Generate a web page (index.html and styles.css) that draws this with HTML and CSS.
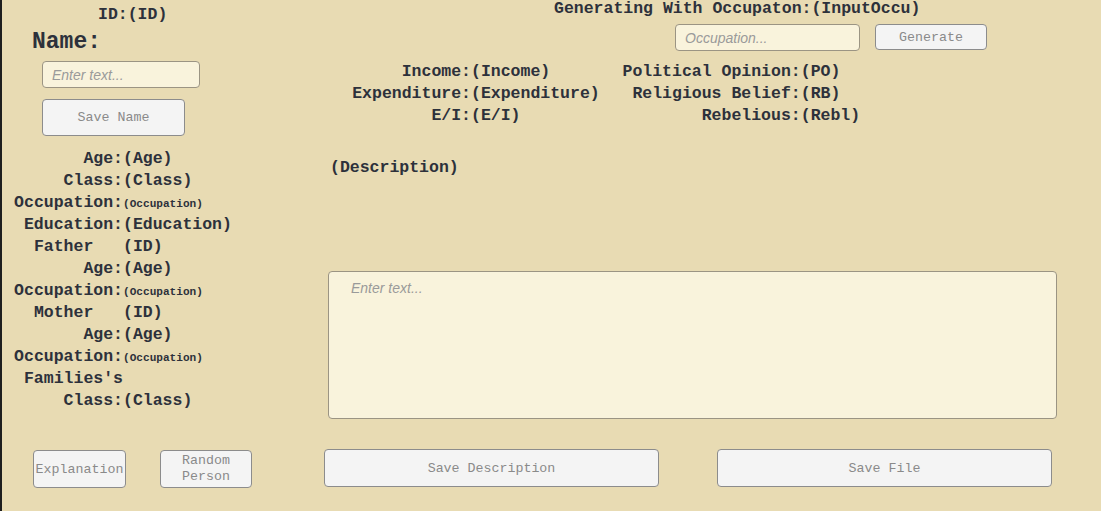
FILE: index.html
```html
<!DOCTYPE html>
<html lang="en">
  <head>
    <meta charset="UTF-8" />
    <meta name="viewport" content="width=device-width, initial-scale=1.0" />
    <title>Person Generator</title>
    <link rel="stylesheet" href="styles.css">
  </head>
  <body>
    <div class="page">
      <div class="side">
        <div class="id-line">ID:(ID)</div>
        <div class="name-title">Name:</div>
        <input type="text" class="field name-field" placeholder="Enter text..." />
        <button type="button" class="btn save-name">Save Name</button>

        <div class="info">
          <span class="lbl">Age:</span><span>(Age)</span>
          <span class="lbl">Class:</span><span>(Class)</span>
          <span class="lbl">Occupation:</span><span class="small">(Occupation)</span>
          <span class="lbl">Education:</span><span>(Education)</span>
          <span class="lbl">Father   </span><span>(ID)</span>
          <span class="lbl">Age:</span><span>(Age)</span>
          <span class="lbl">Occupation:</span><span class="small">(Occupation)</span>
          <span class="lbl">Mother   </span><span>(ID)</span>
          <span class="lbl">Age:</span><span>(Age)</span>
          <span class="lbl">Occupation:</span><span class="small">(Occupation)</span>
          <span class="lbl">Families's</span><span></span>
          <span class="lbl">Class:</span><span>(Class)</span>
        </div>

        <div class="side-buttons">
          <button type="button" class="btn explain">Explanation</button>
          <button type="button" class="btn random">Random<br />Person</button>
        </div>
      </div>

      <div class="main">
        <div class="gen-title">Generating With Occupaton:(InputOccu)</div>
        <div class="gen-row">
          <input type="text" class="field occu-field" placeholder="Occupation..." />
          <button type="button" class="btn generate">Generate</button>
        </div>

        <div class="stats">
          <div class="stat-grid money">
            <span class="lbl">Income:</span><span>(Income)</span>
            <span class="lbl">Expenditure:</span><span>(Expenditure)</span>
            <span class="lbl">E/I:</span><span>(E/I)</span>
          </div>
          <div class="stat-grid belief">
            <span class="lbl">Political Opinion:</span><span>(PO)</span>
            <span class="lbl">Religious Belief:</span><span>(RB)</span>
            <span class="lbl">Rebelious:</span><span>(Rebl)</span>
          </div>
        </div>

        <div class="desc">(Description)</div>
        <textarea class="field desc-field" placeholder="Enter text..."></textarea>

        <div class="main-buttons">
          <button type="button" class="btn wide">Save Description</button>
          <button type="button" class="btn wide">Save File</button>
        </div>
      </div>
    </div>
  </body>
</html>
```

FILE: styles.css
```css
body {
  margin: 0;
  background-color: #e8dbb3;
  font-family: "Courier New", "Nimbus Mono PS", FreeMono, "Liberation Mono", monospace;
  font-weight: bold;
  font-size: 16.5px;
  color: #2d313b;
}
.page {
  display: grid;
  grid-template-columns: 298px 1fr;
  height: 511px;
  border-left: 2px solid #1e1e1e;
  overflow: hidden;
}
.side,
.main {
  display: flex;
  flex-direction: column;
  align-items: flex-start;
}
.id-line {
  margin: 4px 0 0 96px;
  line-height: 22px;
}
.name-title {
  margin: 3px 0 0 30px;
  font-size: 23px;
  line-height: 26px;
}
.field {
  background-color: #f9f3dc;
  border: 1px solid #9b9483;
  border-radius: 4px;
  box-sizing: border-box;
  font-family: "Liberation Sans", Arial, sans-serif;
  font-size: 14px;
  color: #333;
  padding: 0 9px;
  outline: none;
}
.field::placeholder {
  color: #9a9a9a;
  font-style: italic;
}
.btn {
  background-color: #f4f4f4;
  border: 1px solid #8c8c8c;
  border-radius: 4px;
  box-sizing: border-box;
  font-family: "Courier New", "Nimbus Mono PS", FreeMono, "Liberation Mono", monospace;
  font-weight: normal;
  font-size: 13.3px;
  color: #8a8a8a;
  padding: 0;
  cursor: pointer;
}
.name-field {
  margin: 6px 0 0 40px;
  width: 158px;
  height: 27px;
}
.save-name {
  margin: 11px 0 0 40px;
  width: 143px;
  height: 37px;
}
.info {
  display: grid;
  grid-template-columns: 121px auto;
  grid-auto-rows: 22px;
  margin-top: 12px;
  line-height: 22px;
  align-items: baseline;
}
.lbl {
  text-align: right;
  white-space: pre;
}
.small {
  font-size: 11.1px;
}
.side-buttons {
  display: flex;
  gap: 34px;
  margin: 38px 0 0 31px;
}
.explain {
  width: 93px;
  height: 38px;
}
.random {
  width: 92px;
  height: 38px;
  line-height: 16px;
}
.gen-title {
  margin-left: 254px;
  line-height: 18px;
}
.gen-row {
  display: flex;
  gap: 15px;
  margin: 6px 0 0 375px;
}
.occu-field {
  width: 185px;
  height: 27px;
}
.generate {
  width: 112px;
  height: 26px;
}
.stats {
  display: flex;
  gap: 21px;
  margin: 10px 0 0 50px;
}
.stat-grid {
  display: grid;
  line-height: 22px;
}
.money {
  grid-template-columns: 121px auto;
}
.belief {
  grid-template-columns: 180px auto;
}
.desc {
  margin: 30px 0 0 30px;
  line-height: 22px;
}
.desc-field {
  margin: 92px 0 0 28px;
  width: 729px;
  height: 148px;
  padding: 8px 22px;
  resize: none;
}
.main-buttons {
  display: flex;
  gap: 58px;
  margin: 30px 0 0 24px;
}
.wide {
  width: 335px;
  height: 38px;
}
```
